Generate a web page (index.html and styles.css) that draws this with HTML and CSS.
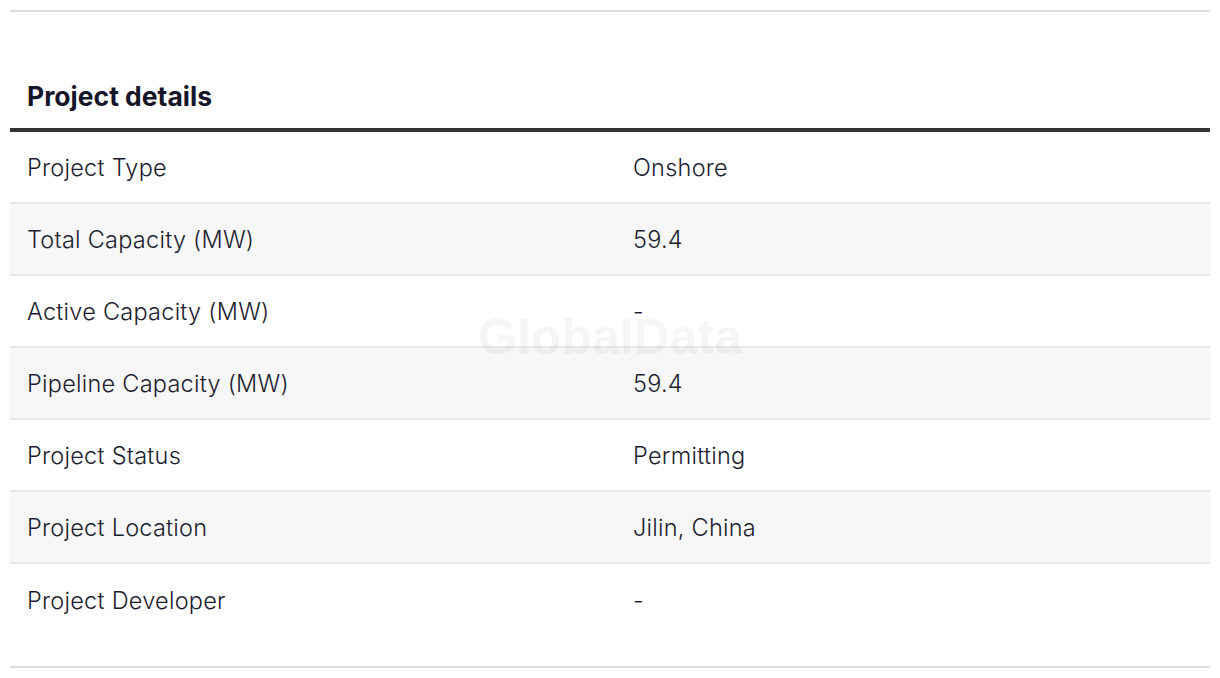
FILE: index.html
```html
<!DOCTYPE html>
<html lang="en">
<head>
<meta charset="utf-8">
<title>Project details</title>
<link rel="stylesheet" href="styles.css">
</head>
<body>
<section class="details">
  <h2 class="title">Project details</h2>
  <div class="table">
    <div class="row"><div class="label">Project Type</div><div class="value">Onshore</div></div>
    <div class="row alt"><div class="label">Total Capacity (MW)</div><div class="value">59.4</div></div>
    <div class="row"><div class="label">Active Capacity (MW)</div><div class="value">-</div></div>
    <div class="row alt"><div class="label">Pipeline Capacity (MW)</div><div class="value">59.4</div></div>
    <div class="row"><div class="label">Project Status</div><div class="value">Permitting</div></div>
    <div class="row alt"><div class="label">Project Location</div><div class="value">Jilin, China</div></div>
    <div class="row last"><div class="label">Project Developer</div><div class="value">-</div></div>
    <div class="watermark">GlobalData</div>
  </div>
</section>
</body>
</html>
```

FILE: styles.css
```css
html, body {
  margin: 0;
  padding: 0;
  background: #ffffff;
}
body {
  padding: 10px;
  font-family: Inter, "Noto Sans", "Liberation Sans", sans-serif;
  color: #1d1d30;
}
.details {
  border-top: 2px solid #dcdcdc;
  border-bottom: 2px solid #dcdcdc;
  padding-bottom: 30px;
}
.title {
  margin: 0;
  height: 120px;
  box-sizing: border-box;
  padding: 68px 0 0 17px;
  font-size: 26.5px;
  font-weight: 700;
  line-height: 32px;
  color: #16162a;
  border-bottom: 4px solid #333333;
}
.table {
  position: relative;
}
.row {
  display: grid;
  grid-template-columns: 606px 1fr;
  height: 72px;
  box-sizing: border-box;
  align-items: center;
  border-bottom: 2px solid #e8e8e8;
  font-size: 23.5px;
  font-weight: 300;
  letter-spacing: 0.25px;
}
.row.alt {
  background: #f7f7f7;
}
.row.last {
  border-bottom: none;
}
.label, .value {
  padding-left: 17px;
  padding-top: 0;
}
.watermark {
  position: absolute;
  left: 0;
  right: 0;
  top: 175px;
  text-align: center;
  font-family: "Liberation Sans", Arial, sans-serif;
  font-weight: 700;
  font-size: 50px;
  line-height: 60px;
  color: #888888;
  opacity: 0.08;
  pointer-events: none;
}
```
